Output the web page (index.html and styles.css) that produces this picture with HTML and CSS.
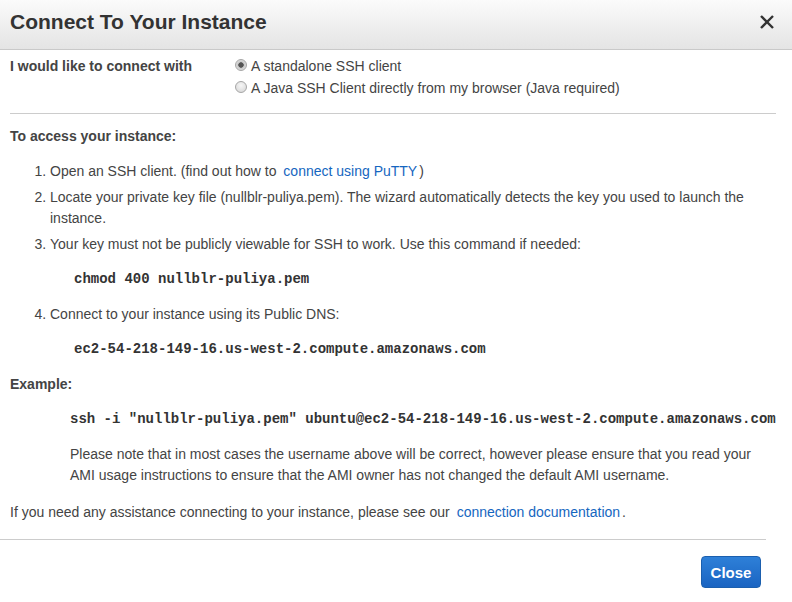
FILE: index.html
```html
<!DOCTYPE html>
<html>
<head>
<meta charset="utf-8">
<link rel="stylesheet" href="styles.css">
</head>
<body>
<div class="dialog">
  <div class="header">
    <h1 class="title">Connect To Your Instance</h1>
    <button class="close-x" aria-label="Close">
      <svg width="16" height="16" viewBox="0 0 16 16"><path d="M2 2 L14 14 M14 2 L2 14" stroke="#333" stroke-width="2.4" fill="none"/></svg>
    </button>
  </div>
  <div class="content">
    <div class="connect-row">
      <div class="connect-label">I would like to connect with</div>
      <div class="options">
        <label class="option"><span class="radio checked"></span>A standalone SSH client</label>
        <label class="option"><span class="radio"></span>A Java SSH Client directly from my browser (Java required)</label>
      </div>
    </div>
    <div class="divider"></div>
    <div class="heading">To access your instance:</div>
    <ol class="steps">
      <li>Open an SSH client. (find out how to <a class="link" href="#">connect using PuTTY</a>)</li>
      <li>Locate your private key file (nullblr-puliya.pem). The wizard automatically detects the key you used to launch the instance.</li>
      <li>Your key must not be publicly viewable for SSH to work. Use this command if needed:
        <div class="code">chmod 400 nullblr-puliya.pem</div>
      </li>
      <li>Connect to your instance using its Public DNS:
        <div class="code">ec2-54-218-149-16.us-west-2.compute.amazonaws.com</div>
      </li>
    </ol>
    <div class="heading example">Example:</div>
    <div class="example-body">
      <div class="code ssh">ssh -i "nullblr-puliya.pem" ubuntu@ec2-54-218-149-16.us-west-2.compute.amazonaws.com</div>
      <p class="note">Please note that in most cases the username above will be correct, however please ensure that you read your AMI usage instructions to ensure that the AMI owner has not changed the default AMI username.</p>
    </div>
    <p class="help">If you need any assistance connecting to your instance, please see our <a class="link" href="#">connection documentation</a>.</p>
  </div>
  <div class="footer">
    <button class="btn-close">Close</button>
  </div>
</div>
</body>
</html>
```

FILE: styles.css
```css
html, body {
  margin: 0;
  padding: 0;
  background: #fff;
}
body {
  font-family: "Liberation Sans", Arial, sans-serif;
  font-size: 14px;
  line-height: 21px;
  color: #444;
  width: 792px;
  height: 602px;
  overflow: hidden;
}
.dialog {
  display: flex;
  flex-direction: column;
}
.header {
  height: 49px;
  border-bottom: 1px solid #c9c9c9;
  background: linear-gradient(to bottom, #fbfbfb, #e4e4e4);
  display: flex;
  align-items: center;
  justify-content: space-between;
  padding: 0 17px 0 10px;
}
.title {
  margin: 0;
  font-size: 21px;
  font-weight: bold;
  color: #333;
  line-height: 26px;
  padding-bottom: 5px;
}
.close-x {
  border: 0;
  background: none;
  padding: 0;
  width: 16px;
  height: 16px;
  display: flex;
  margin-bottom: 5px;
}
.content {
  padding: 5px 16px 0 10px;
}
.connect-row {
  display: flex;
}
.connect-label {
  width: 225px;
  font-weight: bold;
  line-height: 22px;
}
.options {
  display: flex;
  flex-direction: column;
}
.option {
  display: flex;
  align-items: center;
  line-height: 22px;
}
.radio {
  width: 12px;
  height: 12px;
  box-sizing: border-box;
  border-radius: 50%;
  border: 1px solid #a6a6a6;
  background: radial-gradient(circle at 50% 35%, #f6f6f6, #d4d4d4);
  margin-right: 4px;
  position: relative;
  top: -1px;
}
.radio.checked {
  background: radial-gradient(circle, #555 0, #555 2.4px, #c8c8c8 3px, #efefef 100%);
}
.divider {
  height: 1px;
  background: #cccccc;
  margin-top: 14px;
}
.heading {
  font-weight: bold;
  margin-top: 12px;
}
.steps {
  margin: 14px 0 0 0;
  padding-left: 40px;
}
.steps li {
  margin-bottom: 5px;
  padding-left: 0;
}
.steps li:last-child {
  margin-bottom: 0;
}
.link {
  color: #1566c0;
  text-decoration: none;
  padding: 0 2px 0 3px;
}
.code {
  font-family: "Liberation Mono", "Courier New", monospace;
  font-weight: bold;
  color: #333;
  padding-left: 24px;
  margin: 14px 0 14px;
}
.steps li:last-child .code {
  margin-bottom: 0;
}
.example {
  margin-top: 14px;
}
.example-body {
  padding-left: 60px;
}
.code.ssh {
  padding-left: 0;
  white-space: nowrap;
  margin: 14px 0 0;
}
.note {
  margin: 14px 0 0;
}
.help {
  margin: 16px 0 0;
}
.footer {
  margin-top: 16px;
  width: 766px;
  border-top: 1px solid #cccccc;
  display: flex;
  justify-content: flex-end;
  padding-top: 16px;
}
.btn-close {
  width: 60px;
  height: 32px;
  border: 1px solid #1b5fae;
  border-radius: 4px;
  background: linear-gradient(to bottom, #2e80d8, #1a64c2);
  color: #fff;
  font-family: "Liberation Sans", Arial, sans-serif;
  font-weight: bold;
  font-size: 15px;
  padding: 0;
  margin-right: 5px;
}
```
